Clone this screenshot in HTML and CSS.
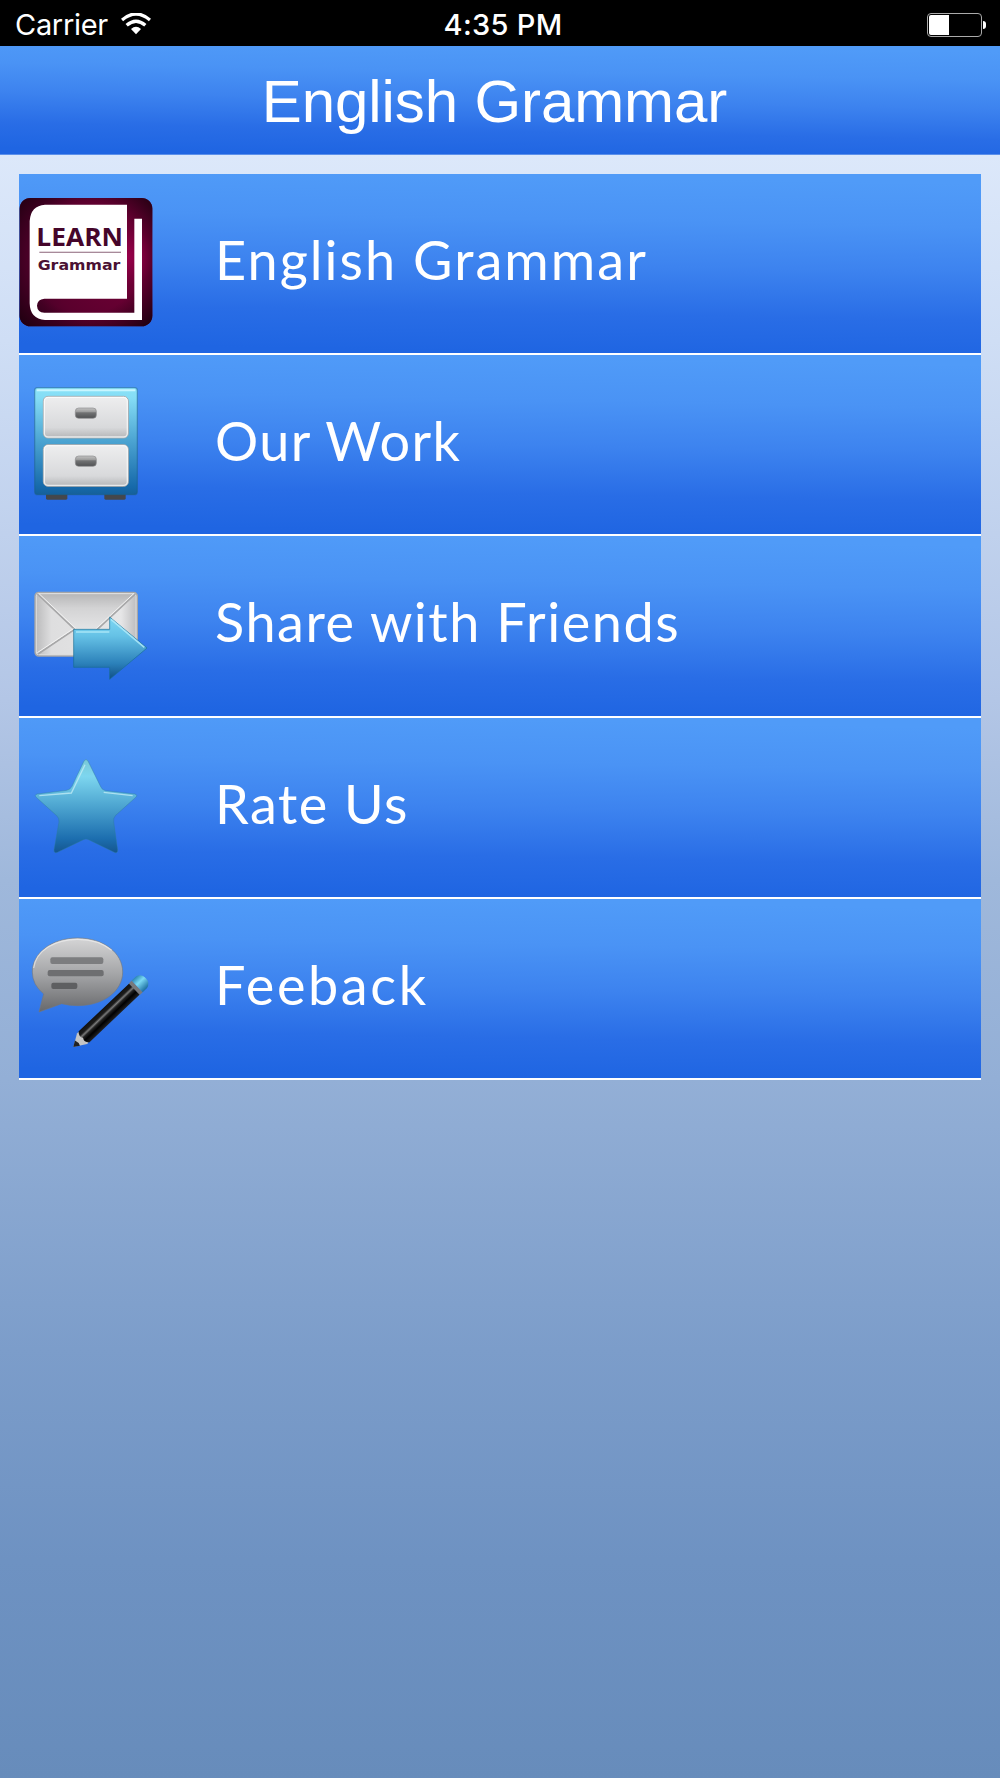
FILE: index.html
```
<!DOCTYPE html>
<html lang="en">

<head>
    <meta charset="UTF-8">
    <meta name="viewport" content="width=device-width, initial-scale=1.0">
    <title>English Grammar</title>
    <link rel="stylesheet" href="styles.css">
</head>

<body>

    <div class="status-bar">
        <div class="status-left">
            <span class="carrier">Carrier</span>
            <svg class="wifi" viewBox="0 0 90 66">
                <path d="M3 21 Q45 -15 87 21" fill="none" stroke="#fff" stroke-width="10" />
                <path d="M17 37 Q45 12 73 37" fill="none" stroke="#fff" stroke-width="10" />
                <path d="M45 64 L30 48 Q45 34 60 48 Z" fill="#fff" />
            </svg>
        </div>
        <span class="time">4:35 PM</span>
        <div class="status-right">
            <div class="battery">
                <div class="battery-level"></div>
            </div>
            <div class="battery-tip"></div>
        </div>
    </div>

    <h1 class="header">English Grammar</h1>

    <ul class="menu">
        <li class="menu-item">
            <svg class="icon" viewBox="27 27 420 537">
                <defs>
                    <radialGradient id="wine" gradientUnits="userSpaceOnUse" cx="350" cy="275" r="290">
                        <stop offset="0" stop-color="#98004a" />
                        <stop offset=".3" stop-color="#6c0034" />
                        <stop offset=".8" stop-color="#5a002d" />
                        <stop offset="1" stop-color="#4c0028" />
                    </radialGradient>
                    <radialGradient id="shade" gradientUnits="userSpaceOnUse" cx="228" cy="280" r="270">
                        <stop offset=".62" stop-color="#200010" stop-opacity="0" />
                        <stop offset="1" stop-color="#200010" stop-opacity=".95" />
                    </radialGradient>
                </defs>
                <rect x="29" y="99" width="398" height="385" rx="32" fill="url(#wine)" />
                <rect x="29" y="99" width="398" height="385" rx="32" fill="url(#shade)" />
                <path d="M105 119 H351 V401 H103 Q82 403 81 422 Q82 442 103 443 H373 V161 H396 V465 H105 Q60 462 59 415 V168 Q62 122 105 119 Z" fill="#fff" />
                <text class="cover-title" x="79" y="243" textLength="260" lengthAdjust="spacingAndGlyphs">LEARN</text>
                <rect x="88" y="260" width="245" height="4" fill="#a88a9a" />
                <text class="cover-subtitle" x="83" y="314" textLength="248" lengthAdjust="spacingAndGlyphs">Grammar</text>
            </svg>
            <span class="label label-grammar">English Grammar</span>
        </li>

        <li class="menu-item">
            <svg class="icon" viewBox="27 0 420 537">
                <defs>
                    <linearGradient id="cabinet" x2="0" y2="1">
                        <stop offset="0" stop-color="#8be3f8" />
                        <stop offset=".1" stop-color="#84dcf5" />
                        <stop offset=".5" stop-color="#4ba3d1" />
                        <stop offset=".93" stop-color="#1669aa" />
                        <stop offset="1" stop-color="#15609a" />
                    </linearGradient>
                    <linearGradient id="drawer" x2="0" y2="1">
                        <stop offset="0" stop-color="#eeeeef" />
                        <stop offset=".75" stop-color="#d8d9db" />
                        <stop offset="1" stop-color="#b4b5b7" />
                    </linearGradient>
                    <linearGradient id="handle" x2="0" y2="1">
                        <stop offset="0" stop-color="#c2c2c2" />
                        <stop offset=".4" stop-color="#989898" />
                        <stop offset=".45" stop-color="#727374" />
                        <stop offset="1" stop-color="#505153" />
                    </linearGradient>
                </defs>
                <rect x="108" y="412" width="64" height="22" rx="4" fill="#45474b" />
                <rect x="283" y="412" width="64" height="22" rx="4" fill="#45474b" />
                <rect x="74" y="98" width="308" height="321" rx="9" fill="url(#cabinet)" stroke="#1d5f83" stroke-opacity=".45" stroke-width="4" />
                <rect x="80" y="103" width="296" height="6" rx="2" fill="#c8f6ff" />
                <g fill="url(#drawer)" stroke="#a5aaae" stroke-width="3">
                    <rect x="100" y="124" width="255" height="125" rx="14" />
                    <rect x="100" y="269" width="255" height="125" rx="14" />
                </g>
                <g fill="none" stroke="#fff" stroke-opacity=".7" stroke-width="4">
                    <rect x="103" y="127" width="249" height="119" rx="11" />
                    <rect x="103" y="272" width="249" height="119" rx="11" />
                </g>
                <g fill="url(#handle)" stroke="#8c8d8e" stroke-width="2">
                    <rect x="196" y="159" width="63" height="31" rx="10" />
                    <rect x="196" y="303" width="63" height="31" rx="10" />
                </g>
            </svg>
            <span class="label label-work">Our Work</span>
        </li>

        <li class="menu-item">
            <svg class="icon" viewBox="27 4 420 537">
                <defs>
                    <linearGradient id="envelope">
                        <stop offset="0" stop-color="#b9b9ba" />
                        <stop offset=".16" stop-color="#dededf" />
                        <stop offset=".84" stop-color="#e6e6e7" />
                        <stop offset="1" stop-color="#bbbbbd" />
                    </linearGradient>
                    <linearGradient id="flap" x2="0" y2="1">
                        <stop offset="0" stop-color="#b7b7b8" />
                        <stop offset=".4" stop-color="#d3d3d4" />
                        <stop offset="1" stop-color="#e4e4e5" />
                    </linearGradient>
                    <linearGradient id="arrow" x2="0" y2="1">
                        <stop offset="0" stop-color="#7fd8f4" />
                        <stop offset=".3" stop-color="#66c2e6" />
                        <stop offset=".75" stop-color="#2b80b9" />
                        <stop offset="1" stop-color="#104e85" />
                    </linearGradient>
                </defs>
                <rect x="75" y="173" width="307" height="191" rx="11" fill="url(#envelope)" stroke="#a6a6a7" stroke-width="4" />
                <path d="M84 178 H374 L262 284 H194 Z" fill="url(#flap)" />
                <rect x="79" y="177" width="299" height="183" rx="8" fill="none" stroke="#ddd" stroke-width="3" />
                <path d="M82 178 L194 284 L84 358 M376 178 L258 288" fill="none" stroke="#a7a7a8" stroke-width="5" />
                <path d="M86 176 L198 282 M190 282 L82 354 M372 176 L254 286" fill="none" stroke="#f2f2f2" stroke-width="3" />
                <path d="M191 284 H299 V247 L411 340 L299 434 V398 H191 Z" fill="url(#arrow)" stroke="#176e95" stroke-opacity=".65" stroke-width="3" />
                <path d="M198 292 H298 M303 254 L403 338" fill="none" stroke="#b5ecfa" stroke-opacity=".8" stroke-width="5" />
            </svg>
            <span class="label label-share">Share with Friends</span>
        </li>

        <li class="menu-item">
            <svg class="icon" viewBox="27 8 420 537">
                <defs>
                    <linearGradient id="star" x2="0" y2="1">
                        <stop offset="0" stop-color="#79c9d6" />
                        <stop offset=".18" stop-color="#7dd6ef" />
                        <stop offset=".5" stop-color="#4da5d0" />
                        <stop offset=".85" stop-color="#1c6eaf" />
                        <stop offset="1" stop-color="#15568f" />
                    </linearGradient>
                </defs>
                <path d="M222 137 Q228 128 234 137 L272 214 Q276 224 286 226 L374 236 Q385 239 376 247 L317 300 Q309 308 311 320 L323 404 Q323 415 313 411 L236 373 Q228 369 220 373 L142 411 Q132 415 132 404 L147 320 Q148 308 140 301 L80 247 Q71 239 82 236 L170 225 Q181 223 186 213 Z" fill="url(#star)" stroke="#2c7a98" stroke-opacity=".4" stroke-width="3" />
                <path d="M88 241 L184 233 L225 148 M281 231 L368 241" fill="none" stroke="#c6eef6" stroke-opacity=".75" stroke-width="4" />
            </svg>
            <span class="label label-rate">Rate Us</span>
        </li>

        <li class="menu-item">
            <svg class="icon" viewBox="27 11 420 537">
                <defs>
                    <linearGradient id="bubble" x2="0" y2="1">
                        <stop offset="0" stop-color="#d5d5d6" />
                        <stop offset=".5" stop-color="#a3a4a6" />
                        <stop offset="1" stop-color="#67686b" />
                    </linearGradient>
                    <linearGradient id="barrel" x2="0" y2="1">
                        <stop offset="0" stop-color="#111" />
                        <stop offset=".25" stop-color="#1c1c1c" />
                        <stop offset=".38" stop-color="#7a7a7a" />
                        <stop offset=".5" stop-color="#222" />
                        <stop offset=".7" stop-color="#000" />
                        <stop offset="1" stop-color="#222" />
                    </linearGradient>
                    <linearGradient id="eraser" x2="0" y2="1">
                        <stop offset="0" stop-color="#2b88b4" />
                        <stop offset=".4" stop-color="#7bd9f4" />
                        <stop offset="1" stop-color="#1b6d9f" />
                    </linearGradient>
                </defs>
                <path d="M203 128 C280 128 338 172 338 230 C338 288 280 331 203 331 Q178 331 155 325 L87 350 L101 296 Q67 268 67 230 C67 172 126 128 203 128 Z" fill="url(#bubble)" stroke="#77787a" stroke-opacity=".6" stroke-width="3" />
                <path d="M71 218 C78 165 135 132 203 132 C245 132 280 144 305 165" fill="none" stroke="#f4f4f4" stroke-opacity=".6" stroke-width="4" />
                <rect x="121" y="186" width="159" height="20" rx="6" fill="#7c7d7f" />
                <rect x="113" y="224" width="168" height="19" rx="6" fill="#6e6f71" />
                <rect x="124" y="262" width="78" height="19" rx="6" fill="#5e5f61" />
                <!-- pencil is drawn flat, tip on the left -->
                <g transform="translate(190 455) rotate(-43.5)">
                    <path d="M0 0 L36 -22 H42 V22 H36 Z" fill="#c5c5c5" />
                    <path d="M0 0 L17 -11 Q22 0 17 11 Z" fill="#222" />
                    <path d="M44 -23 H254 V23 H44 Q32 12 40 0 Q32 -12 44 -23 Z" fill="url(#barrel)" />
                    <rect x="252" y="-24" width="12" height="48" fill="#77797c" />
                    <path d="M264 -24 H282 Q300 -19 300 0 Q300 19 282 24 H264 Z" fill="url(#eraser)" />
                </g>
            </svg>
            <span class="label label-feedback">Feeback</span>
        </li>
    </ul>

</body>

</html>
```
FILE: styles.css
```
* {
    box-sizing: border-box;
}

body {
    margin: 0;
    min-height: 1778px;
    background: linear-gradient(#dce8fa 155px, #cfdef5 340px, #b3c6e6 700px, #9fb8db 880px, #93afd6 1080px, #7c9dca 1350px, #6e92c2 1560px, #678cbb 1778px);
    color: #fff;
    overflow: hidden;
}

.status-bar {
    display: grid;
    grid-template-columns: 1fr auto 1fr;
    align-items: center;
    height: 46px;
    padding: 4px 14px 0 15px;
    background: #000;
    font-family: Inter, sans-serif;
    font-size: 29px;
    line-height: 40px;
}

.status-left {
    display: flex;
    align-items: center;
    gap: 13px;
}

.carrier {
    letter-spacing: -0.3px;
}

.wifi {
    width: 30px;
    height: 22px;
    margin-bottom: 2px;
}

.time {
    padding-left: 5px;
    font-weight: 500;
    letter-spacing: 0.3px;
}

.status-right {
    display: flex;
    justify-content: flex-end;
    align-items: center;
    gap: 1px;
}

.battery {
    width: 55px;
    height: 24px;
    padding: 1px;
    border: 1px solid #aaa;
    border-radius: 4px;
}

.battery-level {
    width: 20px;
    height: 20px;
    background: #fff;
    border-radius: 2px 0 0 2px;
}

.battery-tip {
    width: 3px;
    height: 8px;
    background: #fff;
    border-radius: 0 4px 4px 0;
}

.header,
.menu-item {
    background: linear-gradient(181deg, #509bf8 5%, #4a93f5 27%, #3d83ef 50%, #296de6 75%, #1f65e2 95%);
}

.header {
    height: 109px;
    margin: 0;
    padding-right: 11px;
    border-bottom: 1px solid #5c90ea;
    font: 400 60px/112px "Liberation Sans", Arial, sans-serif;
    letter-spacing: -0.1px;
    text-align: center;
}

.menu {
    margin: 19px 19px 0;
    padding: 0;
    list-style: none;
}

.menu-item {
    display: flex;
    align-items: center;
    height: 181.2px;
    border-bottom: 2px solid #fff;
}

.icon {
    flex: none;
    width: 140px;
    height: 179px;
}

.cover-title {
    font: 700 76px "Open Sans", sans-serif;
    fill: #45052a;
}

.cover-subtitle {
    font: 700 43px "DejaVu Sans", sans-serif;
    fill: #4b1233;
}

.label {
    margin-left: 56px;
    padding-bottom: 7px;
    font: 400 54px/70px Lato, sans-serif;
    white-space: nowrap;
}

.label-grammar {
    letter-spacing: 2.05px;
}

.label-work {
    letter-spacing: 1.4px;
}

.label-share {
    letter-spacing: 1.55px;
}

.label-rate {
    letter-spacing: 1.5px;
}

.label-feedback {
    letter-spacing: 2.6px;
}
```
